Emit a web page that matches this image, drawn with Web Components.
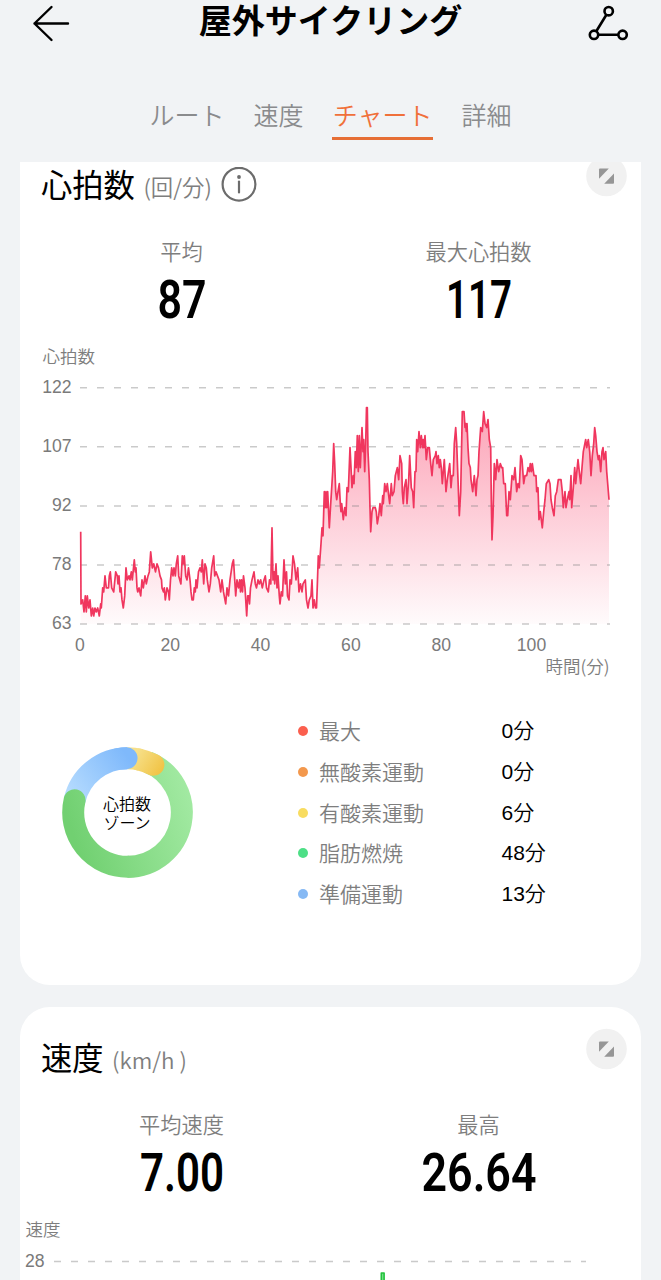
<!DOCTYPE html>
<html lang="ja">
<head>
<meta charset="utf-8">
<title>屋外サイクリング</title>
<style>
  html, body { height: 100%; }
  body {
    margin: 0;
    overflow: hidden;
    background: #f1f3f5;
    color: #000;
    font-family: "Noto Sans CJK JP", sans-serif;
    font-weight: 350;
  }
</style>
</head>
<body>
<workout-page>
  <workout-header slot="header">屋外サイクリング</workout-header>
  <workout-tabs slot="tabs">
    <workout-tab>ルート</workout-tab>
    <workout-tab>速度</workout-tab>
    <workout-tab active>チャート</workout-tab>
    <workout-tab>詳細</workout-tab>
  </workout-tabs>

  <chart-card style="height: 851px">
    <span slot="title">心拍数</span>
    <span slot="unit">(回/分)</span>
    <info-icon slot="info"></info-icon>
    <stat-item slot="stats" value="87" width="49">平均</stat-item>
    <stat-item slot="stats" value="117" width="66">最大心拍数</stat-item>
    <heart-chart></heart-chart>
    <zone-panel>
      <zone-donut slot="donut">心拍数<br>ゾーン</zone-donut>
      <zone-row color="#fb5f4e" value="0">最大</zone-row>
      <zone-row color="#f3984d" value="0">無酸素運動</zone-row>
      <zone-row color="#f8dc60" value="6">有酸素運動</zone-row>
      <zone-row color="#4ddf86" value="48">脂肪燃焼</zone-row>
      <zone-row color="#86b9f4" value="13">準備運動</zone-row>
    </zone-panel>
  </chart-card>

  <chart-card style="height: 851px">
    <span slot="title">速度</span>
    <span slot="unit">(km/h )</span>
    <stat-item slot="stats" value="7.00" width="84">平均速度</stat-item>
    <stat-item slot="stats" value="26.64" width="115">最高</stat-item>
    <speed-chart></speed-chart>
  </chart-card>
</workout-page>

<script>
class BaseElement extends HTMLElement {
  constructor() {
    super();
    this.attachShadow({ mode: "open" });
  }

  connectedCallback() {
    this.shadowRoot.innerHTML = this.template();
  }
}

class WorkoutPage extends BaseElement {
  template() {
    return `
    <style>
      :host { display: flex; flex-direction: column; height: 100vh; }
      main {
        flex: 1;
        min-height: 0;
        overflow: hidden;
        padding: 0 20.5px 0 20px;
      }
      /* the list is scrolled a little way down */
      .scroll { display: flex; flex-direction: column; gap: 22px; margin-top: -28px; }
    </style>
    <slot name="header"></slot>
    <slot name="tabs"></slot>
    <main><div class="scroll"><slot></slot></div></main>
  `;
  }
}
customElements.define("workout-page", WorkoutPage);

class WorkoutHeader extends BaseElement {
  template() {
    return `
    <style>
      :host {
        display: grid;
        grid-template-columns: 50px 1fr 50px;
        align-items: center;
        height: 46px;
        padding: 0 24px;
      }
      h1 {
        margin: 0;
        text-align: center;
        font-size: 33px;
        line-height: 38px;
        font-weight: 600;
        padding-bottom: 8px;
      }
      svg { display: block; fill: none; stroke: #000; }
    </style>
    <svg width="50" height="46" stroke-width="2.4" stroke-linecap="round" stroke-linejoin="round">
      <path d="M44 23.5H10.5M27.5 7L10.5 23.5L27.5 40"/>
    </svg>
    <h1><slot></slot></h1>
    <svg width="50" height="46" stroke-width="2.6">
      <circle cx="21.7" cy="11.2" r="4.2"/>
      <circle cx="7" cy="34.8" r="4.2"/>
      <circle cx="35.6" cy="34.8" r="4.2"/>
      <path d="M19.4 14.8L9.3 31.2M11.2 34.8H31.4"/>
    </svg>
  `;
  }
}
customElements.define("workout-header", WorkoutHeader);

class WorkoutTabs extends BaseElement {
  template() {
    return `
    <style>
      :host {
        display: flex;
        justify-content: center;
        align-items: flex-start;
        gap: 29px;
        height: 116px;
        padding-top: 50px;
        box-sizing: border-box;
      }
    </style>
    <slot></slot>
  `;
  }
}
customElements.define("workout-tabs", WorkoutTabs);

class WorkoutTab extends BaseElement {
  template() {
    return `
    <style>
      :host {
        display: block;
        height: 41px;
        font-size: 25px;
        line-height: 36px;
        color: #8a8b8d;
        border-bottom: 3px solid transparent;
      }
      :host([active]) { color: #f0703a; border-color: #e66e35; padding: 0 1px; margin: 0 -1px; }
    </style>
    <slot></slot>
  `;
  }
}
customElements.define("workout-tab", WorkoutTab);

class ChartCard extends BaseElement {
  template() {
    return `
    <style>
      :host {
        display: block;
        flex: none;
        background: #fff;
        border-radius: 30px;
        overflow: hidden;
      }
      header {
        display: flex;
        align-items: flex-start;
        height: 103px;
        padding: 0 14px 0 21px;
        box-sizing: border-box;
      }
      .title { font-size: 31.3px; line-height: 40px; font-weight: 400; margin-top: 30px; }
      .unit { font-size: 22.4px; line-height: 30px; color: #7e7e7e; margin: 37px 0 0 8.5px; white-space: pre; }
      .info { margin: 33px 0 0 9px; }
      .expand { margin: 21px 0 0 auto; }
      svg { display: block; }
      .stats { display: grid; grid-template-columns: 297px 297px; padding-left: 13px; height: 107px; }
    </style>
    <header>
      <div class="title"><slot name="title"></slot></div>
      <div class="unit"><slot name="unit"></slot></div>
      <div class="info"><slot name="info"></slot></div>
      <svg class="expand" width="41" height="42">
        <circle cx="20.5" cy="21" r="20.3" fill="#f1f1f1"/>
        <g fill="#969696">
          <path d="M14 13.5H22.8L13 23.8V14.5Q13 13.5 14 13.5Z"/>
          <path d="M27 28.8H18.2L28 18.6V27.8Q28 28.8 27 28.8Z"/>
        </g>
      </svg>
    </header>
    <div class="stats"><slot name="stats"></slot></div>
    <slot></slot>
  `;
  }
}
customElements.define("chart-card", ChartCard);

class InfoIcon extends BaseElement {
  template() {
    return `
    <style>
      :host { display: block; }
      svg { display: block; }
    </style>
    <svg width="36" height="36" fill="none" stroke="#6c6c6c" stroke-width="2.2">
      <circle cx="18" cy="17.2" r="16.4"/>
      <path d="M18 14.5V25.5" stroke-linecap="round"/>
      <circle cx="18" cy="10" r="1.9" fill="#6c6c6c" stroke="none"/>
    </svg>
  `;
  }
}
customElements.define("info-icon", InfoIcon);

class StatItem extends BaseElement {
  template() {
    return `
    <style>
      :host { display: flex; flex-direction: column; align-items: center; }
      .label { font-size: 21.2px; line-height: 28px; color: #7e7e7e; }
      svg { display: block; overflow: visible; }
      text { font: 600 54.5px Roboto, sans-serif; text-anchor: middle; }
    </style>
    <div class="label"><slot></slot></div>
    <svg width="140" height="70">
      <text x="70" y="53" textLength="${this.getAttribute("width")}" lengthAdjust="spacingAndGlyphs">${this.getAttribute("value")}</text>
    </svg>
  `;
  }
}
customElements.define("stat-item", StatItem);

// [offset from the left edge of the plot, bpm]
const heartRate = [
  0.7,86, 1,68, 2.7,69, 4,66, 5.3,70, 6.3,66, 7.3,70, 8.7,67, 10,69, 11.3,65, 12.7,67, 13.7,65, 15,67, 16.3,66, 17.7,67, 19.3,65,
  20.7,68, 21.3,67, 22.7,72, 23.7,71, 25,75, 26.3,72, 28.5,72, 29.3,75, 30.3,76, 31.7,72, 33.7,71, 35.7,76, 37.3,75, 38,73, 39,75,
  40,71, 41,72, 42,69, 43.3,67, 44.7,70, 46,77, 47.3,74, 49,75, 50,74, 51.3,76, 52.3,74, 54.3,79, 55.3,76, 56,77, 57,72, 57.7,71,
  59,72, 60.7,70, 62,74, 63.3,72, 65,75, 66.3,73, 68,75, 69.3,76, 70.7,81, 72.3,77, 73.7,78, 75.5,76, 77,78, 78.5,77, 80,75,
  81.5,74, 82,72, 83.5,71, 84.3,72, 85.3,69, 87,72, 88.5,71, 89.3,69, 90.5,74, 91.7,77, 93,75, 94,77, 95.3,75, 96.3,78, 97.7,80,
  98.7,75, 100.9,73, 102.3,80, 103.3,78, 104.3,80, 105.7,75, 107,74, 108.5,77, 110,74, 111,71, 112,69, 113.3,69, 114.3,72,
  115.3,71, 116,74, 117,72, 118.5,76, 120,77, 121.3,76, 122.3,79, 123.7,73, 125,78, 126.3,77, 127.3,74, 129,71, 130.3,73,
  131.7,77, 133.7,80, 134.7,75, 136,76, 137.5,75, 139,74, 140.7,71, 142,74, 143.5,71, 145.7,68, 147,72, 148.5,70, 150,74,
  152.3,78, 153.5,79, 155.7,70, 157,74, 158.5,72, 159.7,74, 160.5,71, 161.5,74, 162.5,71, 163.5,75, 165,72, 166.7,65, 167.7,70,
  168.7,70, 169.5,68, 170.5,72, 172,74, 174,76, 175.3,73, 176.5,72, 178,74, 179.3,73, 180.7,74, 182.3,72, 184,74, 185.3,75,
  186.5,72, 188.3,71, 189.5,74, 190.8,73, 192,87, 193,74, 194,76, 194.7,73, 196,78, 197,72, 198,75, 199.3,70, 200,68, 201.3,71,
  202.5,70, 204,79, 205.3,73, 206.5,76, 207.5,70, 209,69, 210,74, 211.3,73, 213,80, 214.5,78, 216,74, 217.7,77, 219,71,
  220.5,73, 222,71, 223,73, 225.3,74, 226.5,69, 228,67, 229.3,69, 231,70, 232,74, 233,67, 234.3,69, 235.5,67, 236.5,67,
  237.5,74, 238.3,80, 239.3,77, 241,83, 242,87, 243,85, 244.3,96, 245,92, 246,96, 246.7,92, 247.7,96, 249.3,87, 250.7,93,
  251.7,97, 252.7,101, 253.7,108, 254.7,103, 255.7,96, 256.7,94, 258,96, 259.3,98, 260.3,93, 261,91, 261.7,93, 263.3,89,
  264.7,92, 266,90, 267,97, 268.3,96, 270,107, 271,102, 272,97, 273.3,100, 274,98, 275.3,106, 276.3,102, 277.3,110, 278.3,101,
  279.3,110, 280.3,102, 282,112, 283,106, 283.7,109, 284.7,101, 285.7,108, 286.5,117, 287.3,117, 288,106, 289.3,99, 290,92,
  290.7,86, 292,91, 293,92, 295.3,92, 296.3,91, 297.3,88, 298.7,90, 300,93, 301.3,90, 302.7,95, 303.3,93, 304.7,98, 306,96,
  307.3,98, 308.7,95, 309.7,93, 311.3,98, 312.3,95, 314,96, 315.3,100, 317.3,102, 318.7,99, 320,105, 321.7,103, 322.3,96,
  323.3,93, 324.3,97, 326,99, 327,93, 328.7,99, 329.7,105, 331.3,97, 332.7,96, 333.7,92, 335,101, 336,101, 336.7,109,
  337.7,106, 339,111, 340.3,107, 341.3,110, 342.7,107, 343.3,109, 344,107, 345,110, 346.3,104, 347.7,107, 349.3,107,
  350.7,103, 352,100, 353.3,104, 355.3,105, 356,106, 357,103, 358.3,105, 359.3,102, 360.3,104, 361.3,102, 362.3,98,
  364.3,104, 366,96, 367.3,99, 369.7,103, 371,97, 372,100, 373.3,100, 374.3,108, 375.7,112, 376.7,108, 377.7,101, 379.3,90,
  380.7,96, 382.3,116, 384,116, 385,112, 385.7,113, 386.3,111, 387,113, 388,107, 389,103, 390.3,102, 391,99, 392.7,96,
  394.3,100, 395,98, 396,95, 397,99, 398,100, 399,106, 400.7,112, 402.3,111, 403.7,116, 405,113, 406.7,112, 408,114,
  409.3,109, 410.7,107, 411.3,94, 412,84, 413,90, 414.3,103, 415.7,99, 417,104, 418.7,101, 420.3,103, 421.7,102, 422.7,102,
  423.7,98, 425.3,98, 426.7,90, 427.7,90, 429,96, 430.3,94, 432,100, 433.7,99, 435,102, 436.7,96, 438,98, 439.3,97, 440.7,105,
  442,104, 443.7,98, 445,100, 446.7,100, 448,102, 449.3,101, 450.3,103, 451.3,101, 452.3,103, 454,100, 456,100, 456.7,96,
  458,97, 459,89, 460.3,91, 462.3,87, 463.7,91, 465,94, 466.3,98, 468.7,99, 470,98, 471,94, 472.3,92, 474,90, 475.3,95,
  476.7,96, 478.3,99, 481,99, 482.3,96, 483.3,92, 485,96, 486,92, 487.3,94, 489,96, 489.7,94, 491,100, 491.7,92, 493.3,97,
  494.7,102, 495.7,98, 498,104, 499.3,101, 500.7,98, 502,102, 503.3,106, 505.7,109, 506.7,107, 508.3,109, 509.7,106, 511,100,
  512.3,105, 513.7,108, 514.7,112, 515.7,110, 517,106, 518.3,104, 519.3,105, 520.7,101, 522,106, 523,107, 524,104, 525.7,106,
  526.7,101, 527.7,98, 529,94,
];

const chartStyle = `
  :host { display: block; }
  .name { font-size: 17.5px; line-height: 24px; color: #7e7e7e; }
  svg { display: block; }
  text { font: 400 17.6px "Liberation Sans", Arial, sans-serif; fill: #7a7a7a; }
  .grid { stroke: #808080; stroke-opacity: .42; stroke-width: 1.5; stroke-dasharray: 7 10; }
`;

class HeartChart extends BaseElement {
  template() {
    const left = 60;
    const bottom = 256;
    const y = (bpm) => bottom - (bpm - 63) * 4.01;
    const points = [];
    for (let i = 0; i < heartRate.length; i += 2) {
      points.push(`${(left + heartRate[i]).toFixed(1)} ${y(heartRate[i + 1]).toFixed(1)}`);
    }
    const line = "M" + points.join("L");
    const rows = [122, 107, 92, 78, 63];
    const cols = [0, 20, 40, 60, 80, 100];

    return `
    <style>
      ${chartStyle}
      .name { padding-left: 22.5px; }
      .time { font-size: 17.5px; line-height: 24px; color: #7e7e7e; text-align: right; padding-right: 31px; margin-top: -4px; }
    </style>
    <div class="name">心拍数</div>
    <svg width="620" height="290">
      <defs>
        <linearGradient id="fill" gradientUnits="userSpaceOnUse" x1="0" y1="38" x2="0" y2="${bottom}">
          <stop offset="0" stop-color="#f8335f" stop-opacity=".46"/>
          <stop offset="1" stop-color="#f8335f" stop-opacity=".02"/>
        </linearGradient>
      </defs>
      <path d="${line}V${bottom}H${left + 0.7}Z" fill="url(#fill)"/>
      ${rows.map((v, i) => `
        <path class="grid" d="M${left} ${19.7 + i * 59.1}H590"/>
        <text x="51.5" y="${25 + i * 59.1}" text-anchor="end">${v}</text>`).join("")}
      <path d="${line}" fill="none" stroke="#f0365e" stroke-width="1.7" stroke-linejoin="round"/>
      ${cols.map((v, i) => `<text x="${left + i * 90.3}" y="282.5" text-anchor="middle">${v}</text>`).join("")}
    </svg>
    <div class="time">時間(分)</div>
  `;
  }
}
customElements.define("heart-chart", HeartChart);

class SpeedChart extends BaseElement {
  template() {
    return `
    <style>
      ${chartStyle}
      .name { padding-left: 5.5px; }
    </style>
    <div class="name">速度</div>
    <svg width="620" height="290">
      <path class="grid" d="M34 20.5H566"/>
      <text x="5" y="26">28</text>
      <path d="M361.3 60V32H364.1V60" fill="#7be58d" stroke="#22c13c" stroke-width="1.6" stroke-linejoin="round"/>
    </svg>
  `;
  }
}
customElements.define("speed-chart", SpeedChart);

class ZonePanel extends BaseElement {
  template() {
    return `
    <style>
      :host { display: flex; padding: 33px 0 0 41.5px; }
      .donut { width: 236px; padding-top: 36px; }
      .rows { display: flex; flex-direction: column; }
    </style>
    <div class="donut"><slot name="donut"></slot></div>
    <div class="rows"><slot></slot></div>
  `;
  }
}
customElements.define("zone-panel", ZonePanel);

class ZoneDonut extends BaseElement {
  // point on the ring's middle line, degrees clockwise from the top
  at(deg) {
    const a = (deg * Math.PI) / 180;
    return `${(65.5 + 54.3 * Math.sin(a)).toFixed(2)} ${(65.5 - 54.3 * Math.cos(a)).toFixed(2)}`;
  }

  arc(from, to) {
    return `M${this.at(from)}A54.3 54.3 0 ${to - from > 180 ? 1 : 0} 1 ${this.at(to)}`;
  }

  template() {
    return `
    <style>
      :host { display: grid; width: 131px; height: 131px; place-items: center; }
      svg, .label { grid-area: 1 / 1; }
      svg { display: block; fill: none; stroke-width: 22; }
      .label { font-size: 16px; line-height: 19px; text-align: center; }
    </style>
    <svg width="131" height="131">
      <defs>
        <linearGradient id="blue" gradientUnits="userSpaceOnUse" x1="10" y1="50" x2="66" y2="10">
          <stop offset="0" stop-color="#b5dbfe"/><stop offset="1" stop-color="#7fb9fb"/>
        </linearGradient>
        <linearGradient id="green" gradientUnits="userSpaceOnUse" x1="125" y1="30" x2="5" y2="70">
          <stop offset="0" stop-color="#a3eaa3"/><stop offset="1" stop-color="#71d071"/>
        </linearGradient>
        <linearGradient id="yellow" gradientUnits="userSpaceOnUse" x1="72" y1="8" x2="100" y2="26">
          <stop offset="0" stop-color="#f6e08a"/><stop offset="1" stop-color="#f1c242"/>
        </linearGradient>
      </defs>
      <path d="${this.arc(283, 360)}" stroke="url(#blue)"/>
      <path d="${this.arc(22, 180)}" stroke="url(#green)"/>
      <path d="${this.arc(179, 283)}" stroke="url(#green)" stroke-linecap="round"/>
      <path d="${this.arc(12, 28.5)}" stroke="url(#yellow)" stroke-linecap="round"/>
      <path d="${this.arc(0, 14)}" stroke="url(#yellow)"/>
      <path d="${this.arc(350, 359)}" stroke="url(#blue)" stroke-linecap="round"/>
    </svg>
    <div class="label"><slot></slot></div>
  `;
  }
}
customElements.define("zone-donut", ZoneDonut);

class ZoneRow extends BaseElement {
  template() {
    return `
    <style>
      :host {
        display: grid;
        grid-template-columns: 21.5px 182.5px 60px;
        align-items: center;
        height: 40.7px;
        font-size: 21px;
        line-height: 30px;
      }
      i { width: 10px; height: 10px; border-radius: 50%; background: ${this.getAttribute("color")}; }
      .name { color: #7e7e7e; padding-bottom: 2px; }
      .value { font-family: "Liberation Sans", "Noto Sans CJK JP", sans-serif; }
    </style>
    <i></i>
    <span class="name"><slot></slot></span>
    <span class="value">${this.getAttribute("value")}分</span>
  `;
  }
}
customElements.define("zone-row", ZoneRow);
</script>
</body>
</html>
